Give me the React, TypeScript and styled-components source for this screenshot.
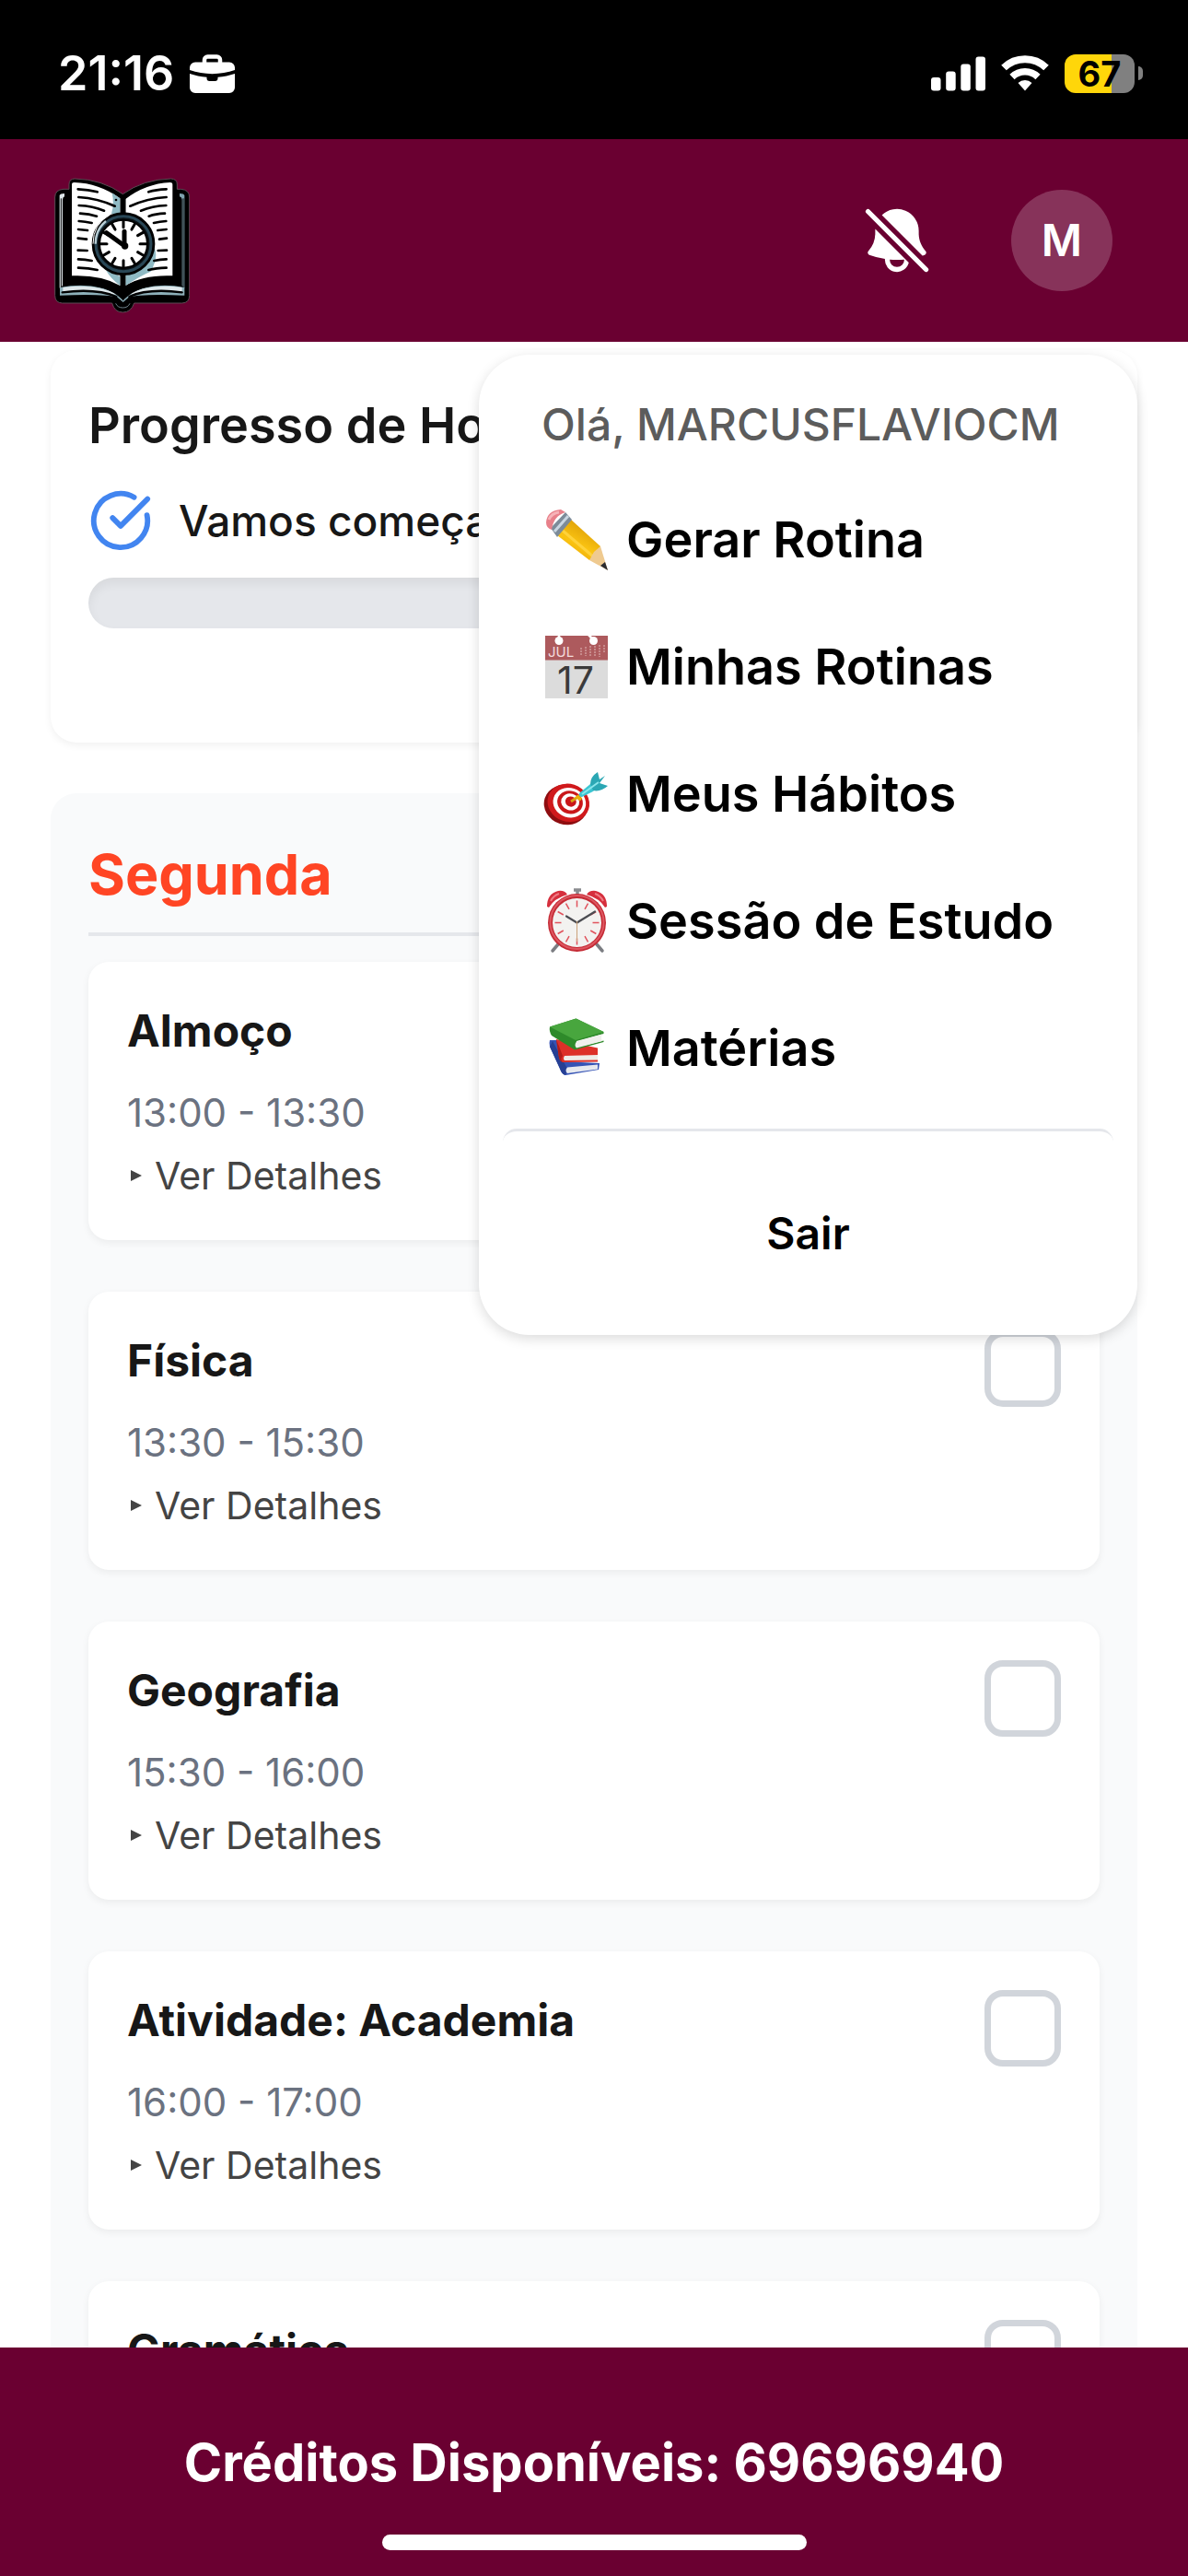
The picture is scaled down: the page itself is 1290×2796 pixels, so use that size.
import React from "react";
import styled, { createGlobalStyle } from "styled-components";
import { CircleCheckBig } from "lucide-react";

const wine = "#6a0031";

const GlobalStyle = createGlobalStyle`
  *, *::before, *::after { box-sizing: border-box; }
  body {
    margin: 0;
    background: #fff;
    color: #171717;
    font-family: Inter, "Liberation Sans", sans-serif;
  }
  h1, h2, h3, p, ul { margin: 0; padding: 0; }
  button { font: inherit; color: inherit; background: none; border: 0; padding: 0; cursor: pointer; }
`;

const Shell = styled.div`
  display: flex;
  flex-direction: column;
  height: 100vh;
`;

/* ---------- status bar ---------- */

const StatusBar = styled.div`
  flex: none;
  display: flex;
  align-items: center;
  justify-content: space-between;
  height: 151px;
  padding: 8px 49px 0 63px;
  background: #000;
  color: #fff;
`;

const StatusGroup = styled.div`
  display: flex;
  align-items: center;
  gap: 17px;
`;

const Clock = styled.span`
  font-size: 52px;
  font-weight: 600;
  line-height: 60px;
`;

const Battery = styled.div`
  display: flex;
  align-items: center;
  gap: 4px;
`;

const BatteryBody = styled.div<{ $level: number }>`
  width: 76px;
  height: 42px;
  border-radius: 12px;
  background: linear-gradient(90deg, #ffd60a ${(p) => p.$level}%, #808080 ${(p) => p.$level}%);
  color: #000;
  font-size: 38px;
  font-weight: 700;
  line-height: 42px;
  text-align: center;
`;

const BatteryTip = styled.div`
  width: 5px;
  height: 15px;
  border-radius: 0 8px 8px 0;
  background: #808080;
`;

/* ---------- header ---------- */

const Header = styled.header`
  position: relative;
  z-index: 2;
  flex: none;
  display: flex;
  align-items: center;
  justify-content: space-between;
  height: 220px;
  padding: 0 82px 0 59px;
  background: ${wine};
`;

const HeaderActions = styled.div`
  display: flex;
  align-items: center;
  gap: 82px;
`;

const IconButton = styled.button`
  display: flex;
  color: #fff;
`;

const Avatar = styled.button`
  width: 110px;
  height: 110px;
  border-radius: 50%;
  background: rgba(255, 255, 255, 0.2);
  color: #fff;
  font-size: 48px;
  font-weight: 600;
  line-height: 110px;
`;

/* ---------- dropdown ---------- */

const Menu = styled.nav`
  position: absolute;
  top: calc(100% + 14px);
  right: 55px;
  width: 715px;
  padding: 28px 26px 54px;
  border-radius: 55px;
  background: #fff;
  color: #000;
  box-shadow: 0 4px 14px rgba(0, 0, 0, 0.14);
`;

const Greeting = styled.p`
  margin-bottom: 8px;
  padding: 0 42px;
  color: #5c5c5c;
  font-size: 48px;
  font-weight: 500;
  line-height: 96px;
  white-space: nowrap;
`;

const MenuList = styled.ul`
  list-style: none;
`;

const MenuLink = styled.a`
  display: flex;
  align-items: center;
  gap: 20px;
  height: 138px;
  padding: 0 42px;
  color: inherit;
  font-size: 54px;
  font-weight: 600;
  line-height: 80px;
  text-decoration: none;
  white-space: nowrap;
`;

const Separator = styled.div`
  height: 30px;
  margin: 18px 0 28px;
  border-top: 3px solid #e5e7eb;
  border-radius: 15px;
`;

const LogoutButton = styled.button`
  display: block;
  width: 100%;
  font-size: 48px;
  font-weight: 600;
  line-height: 112px;
`;

/* ---------- content ---------- */

const Main = styled.main`
  flex: 1;
  min-height: 0;
  display: flex;
  flex-direction: column;
  gap: 55px;
  padding: 9px 55px 55px;
  overflow-y: auto;
  scrollbar-width: none;
`;

const ProgressCard = styled.section`
  flex: none;
  padding: 42px 41px 124px;
  border-radius: 28px;
  background: #fff;
  box-shadow: 0 3px 9px rgba(0, 0, 0, 0.06);
`;

const ProgressTitle = styled.h2`
  font-size: 54px;
  font-weight: 600;
  line-height: 80px;
`;

const ProgressRow = styled.div`
  display: flex;
  align-items: center;
  gap: 28px;
  height: 70px;
  margin: 28px 0 27px;
  font-size: 46px;
  font-weight: 500;
  line-height: 66px;
`;

const Track = styled.div`
  height: 55px;
  border-radius: 28px;
  background: #e5e7eb;
  box-shadow: inset 0 6px 12px rgba(0, 0, 0, 0.06);
`;

const Day = styled.section`
  flex: none;
  padding: 42px 41px;
  border-radius: 28px;
  background: #f9fafb;
`;

const DayTitle = styled.h2`
  margin-bottom: 28px;
  padding-bottom: 17px;
  border-bottom: 4px solid #e5e7eb;
  color: #ff4524;
  font-size: 61px;
  font-weight: 700;
  line-height: 92px;
`;

const TaskList = styled.div`
  display: flex;
  flex-direction: column;
  gap: 56px;
`;

const Task = styled.article`
  display: flex;
  align-items: flex-start;
  justify-content: space-between;
  padding: 42px;
  border-radius: 22px;
  background: #fff;
  box-shadow: 0 3px 9px rgba(0, 0, 0, 0.06);
`;

const TaskTitle = styled.h3`
  margin-bottom: 28px;
  font-size: 48px;
  font-weight: 700;
  line-height: 66px;
`;

const TaskTime = styled.p`
  margin-bottom: 12px;
  color: #6b7280;
  font-size: 42px;
  line-height: 56px;
`;

const Summary = styled.summary`
  display: flex;
  align-items: center;
  gap: 14px;
  padding-left: 4px;
  color: #444;
  font-size: 41px;
  line-height: 56px;
  list-style: none;
  cursor: pointer;

  &::-webkit-details-marker { display: none; }

  &::before {
    content: "";
    border-style: solid;
    border-width: 6px 0 6px 12px;
    border-color: transparent transparent transparent currentColor;
  }
`;

const Checkbox = styled.input`
  appearance: none;
  flex: none;
  width: 83px;
  height: 83px;
  margin: 0;
  border: 7px solid #d1d5db;
  border-radius: 20px;
  background: #fff;
`;

/* ---------- footer ---------- */

const Footer = styled.footer`
  position: relative;
  z-index: 1;
  flex: none;
  display: flex;
  flex-direction: column;
  align-items: center;
  justify-content: space-between;
  height: 248px;
  padding: 85px 0 28px;
  background: ${wine};
  color: #fff;
`;

const Credits = styled.p`
  font-size: 56px;
  font-weight: 700;
  line-height: 80px;
`;

const HomeIndicator = styled.div`
  width: 461px;
  height: 17px;
  border-radius: 9px;
  background: #fff;
`;

/* ---------- drawings ---------- */

const BriefcaseIcon = () => (
  <svg width="49" height="42" viewBox="0 0 49 42" fill="#fff" aria-hidden="true">
    <path d="M16 10V6a3.500 3.500 0 0 1 3.500-3.500h10A3.500 3.500 0 0 1 33 6v4" fill="none" stroke="#fff" strokeWidth="4.500" />
    <path d="M6 8.500h37a6 6 0 0 1 6 6V17C34 22.500 15 22.500 0 17v-2.500a6 6 0 0 1 6-6z" />
    <path d="M0 21c6 2 12 3.200 18.500 3.700V26a3 3 0 0 0 3 3h6a3 3 0 0 0 3-3v-1.300C37 24.200 43 23 49 21v15a6 6 0 0 1-6 6H6a6 6 0 0 1-6-6z" />
  </svg>
);

const SignalIcon = () => (
  <svg width="59" height="38" viewBox="0 0 59 38" fill="#fff" aria-hidden="true">
    <rect x="0" y="23" width="10.500" height="14.500" rx="3" />
    <rect x="16.200" y="16.500" width="10.500" height="21" rx="3" />
    <rect x="32.300" y="8.500" width="10.500" height="29" rx="3" />
    <rect x="48.500" y="0.500" width="10.500" height="37" rx="3" />
  </svg>
);

const WifiIcon = () => (
  <svg width="52" height="39" viewBox="0 0 52 39" fill="none" stroke="#fff" aria-hidden="true">
    <path d="M3 13.500a33 33 0 0 1 46 0" strokeWidth="8" />
    <path d="M12 23.500a20 20 0 0 1 28 0" strokeWidth="7.500" />
    <path d="M18.500 30a11 11 0 0 1 15 0L26 38.500z" fill="#fff" stroke="none" />
  </svg>
);

const BellSlashIcon = () => (
  <svg width="84" height="84" viewBox="0 0 24 24" fill="currentColor" aria-hidden="true">
    <path d="M3.53 2.47a.75.75 0 0 0-1.06 1.06l18 18a.75.75 0 1 0 1.06-1.06l-18-18ZM20.57 16.476c-.223.082-.448.161-.674.238L7.319 4.137A6.75 6.75 0 0 1 18.75 9v.75c0 2.123.8 4.057 2.118 5.52a.75.75 0 0 1-.297 1.206Z" />
    <path
      fillRule="evenodd"
      clipRule="evenodd"
      d="M5.25 9c0-.184.007-.366.022-.546l10.384 10.384a3.751 3.751 0 0 1-7.396-1.119 24.585 24.585 0 0 1-4.831-1.244.75.75 0 0 1-.298-1.205A8.217 8.217 0 0 0 5.25 9.75V9Zm4.502 8.9a2.25 2.25 0 1 0 4.496.002 25.057 25.057 0 0 1-4.496 0Z"
    />
  </svg>
);

const Logo = () => (
  <svg width="147" height="158" viewBox="58 6 441 474" role="img" aria-label="Logo">
    <path
      d="M106 76V60q0-17 18-18 90 2 157 50Q348 44 438 42q20 1 20 18v16h12q28 2 28 26v320q0 24-24 25H318q-10 30-37 30t-35-30H84q-24-1-24-25V102q0-24 28-26z"
      fill="#000"
      stroke="#5d4b55"
      strokeWidth="3"
    />
    <path d="M75 96q2-6 16-6v10q-6 2-6 10v280l-10 8z" fill="#dfe7ea" />
    <path d="M482 96q-2-6-16-6v10q8 2 8 10v280l8 8z" fill="#7fa3ae" />
    <path d="M80 106v290M478 106v290" stroke="#000" strokeWidth="3" />
    <path d="M76 396q120-22 200 30l6 14 6-14q80-52 194-30v26q-140-6-182 6l-18 16-18-16q-44-12-188-6z" fill="#8db0b9" />
    <path d="M86 396q110-14 180 24-90-14-180-12zM474 396q-110-14-180 24 90-14 180-12z" fill="#dfe9ec" />
    <path d="M84 412q110-14 176 14M474 412q-110-14-172 14" stroke="#000" strokeWidth="7" fill="none" strokeLinecap="round" />
    <path d="M92 386q130-14 190 46 60-60 184-46" stroke="#000" strokeWidth="9" fill="none" />
    <path d="M258 448q6 14 23 14t23-14" stroke="#70848c" strokeWidth="3" fill="none" />
    <path d="M115 61q0-7 8-7 80 2 149 52v284q-62-36-157-32z" fill="#fff" />
    <path d="M443 61q0-7-8-7-80 4-145 54v282q58-36 153-32z" fill="#fff" />
    <path d="M246 88l26 18v50h-28q10-30 2-68zM226 340l46 20v30q-30-22-46-50zM290 390v-34q70-10 94-90 14 30-12 78-30 12-82 46z" fill="#8fbac4" />
    <circle cx="259" cy="111" r="4" fill="#000" />
    <path
      d="M135 76q34 1 63 9M137 102q62 4 118 29M138 129q46 2 82 17M142 155q30 1 54 9M138 180q20 1 42 6M136 207l30 3M135 236l28 3M135 275l30 1M136 304q22 1 44 5M136 332q34 1 62 7"
      stroke="#000"
      strokeWidth="8"
      strokeLinecap="round"
      fill="none"
    />
    <path
      d="M423 76q-34 1-58 9M423 102q-62 4-118 29M422 129q-46 2-82 17M418 155q-30 1-52 9M422 180q-20 1-40 6M423 207l-28 3M424 236l-24 3M424 275l-28 1M423 304q-20 1-40 5M423 332q-34 1-58 7"
      stroke="#000"
      strokeWidth="8"
      strokeLinecap="round"
      fill="none"
    />
    <path d="M282 100v60M282 350v72" stroke="#000" strokeWidth="16" />
    <circle cx="283" cy="254" r="98" fill="#0b1216" stroke="#000" strokeWidth="10" />
    <circle cx="283" cy="254" r="90" fill="none" stroke="#294756" strokeWidth="9" />
    <path d="M192 254q0-46 34-74" stroke="#b9ced5" strokeWidth="7" fill="none" />
    <path d="M238 160q-54 30-54 94" stroke="#fff" strokeWidth="3" fill="none" />
    <circle cx="283" cy="254" r="78" fill="#fff" stroke="#000" strokeWidth="6" />
    {Array.from({ length: 12 }, (_, i) => (
      <path key={i} d="M283 180v20" stroke="#000" strokeWidth="9" strokeLinecap="round" transform={`rotate(${i * 30} 283 254)`} />
    ))}
    <path d="M288 262L228 218" stroke="#000" strokeWidth="15" strokeLinecap="round" />
    <path d="M286 260V214" stroke="#000" strokeWidth="15" strokeLinecap="round" />
    <circle cx="288" cy="261" r="11" fill="#000" />
  </svg>
);

const Emoji = ({ children }: { children: React.ReactNode }) => (
  <svg width="72" height="72" viewBox="0 0 72 72" aria-hidden="true">
    {children}
  </svg>
);

const Pencil = () => (
  <Emoji>
    <defs>
      <linearGradient id="pencilBody" x1="0" y1="1" x2="0.6" y2="0">
        <stop offset="0" stopColor="#e29a00" />
        <stop offset="0.5" stopColor="#fbc412" />
        <stop offset="1" stopColor="#d99a05" />
      </linearGradient>
    </defs>
    <path d="M17 31L32 14l32 29-2 9-10 6z" fill="url(#pencilBody)" />
    <path d="M23 26L56 54" stroke="#ffd23a" strokeWidth="3" />
    <path d="M52 58l5-9 7-6 8 26z" fill="#efca90" />
    <path d="M64 64l5-4 3 9z" fill="#2b2b30" />
    <path d="M10 23L26 6l7 8-16 19z" fill="#7c8b99" />
    <path d="M14 27L29 10" stroke="#c9d6e2" strokeWidth="3" />
    <path d="M5 17Q6 4 21 3l5 3Q13 10 11 25q-6-2-6-8z" fill="#e8808a" />
    <path d="M8 14q3-7 11-8" stroke="#f6b3b8" strokeWidth="3" fill="none" />
  </Emoji>
);

const Calendar = () => (
  <Emoji>
    <path fill="#dcdcdc" d="M4 2h68v68H4z" />
    <path fill="#ad5a5d" d="M4 2h68v26.500H4z" />
    <circle cx="19" cy="7.500" r="4.500" fill="#fff" />
    <circle cx="56.500" cy="7.500" r="4.500" fill="#fff" />
    <path d="M19 0v7M51 1l6 6" stroke="#fff" strokeWidth="2.500" />
    <text x="7" y="24.500" fontSize="15" fontWeight="400" fill="#f3dcdc">JUL</text>
    <path d="M43 15v9M48 14v10M53 13v12M58 13v12M63 12v13M68 12v9" stroke="#cf9a9b" strokeWidth="1.500" strokeDasharray="2 1" />
    <text x="37" y="64.500" fontSize="41" fontWeight="400" fill="#3a3a3a" textAnchor="middle">17</text>
  </Emoji>
);

const Target = () => (
  <Emoji>
    <g transform="rotate(18 28 46)">
      <ellipse cx="27" cy="48" rx="24" ry="21.500" fill="#8e0d10" />
      <ellipse cx="29" cy="45" rx="23" ry="20.500" fill="#d0191c" />
      <ellipse cx="30" cy="44.500" rx="18" ry="16" fill="#fff" />
      <ellipse cx="30.500" cy="44" rx="14" ry="12.500" fill="#c9171a" />
      <ellipse cx="30.500" cy="43.500" rx="10" ry="9" fill="#fff" />
      <ellipse cx="31" cy="43" rx="6" ry="5.500" fill="#c9171a" />
    </g>
    <path d="M32 44l9-6" stroke="#d9a514" strokeWidth="3" />
    <path d="M38 38l5 4" stroke="#eab308" strokeWidth="4" />
    <path d="M41 35l12-10 8-3 1 5-6 6-12 6q-4 0-3-4z" fill="#3cc6d2" />
    <path d="M53 25q0-8 8-13l2 8 6-4-6 8 9 3q-8 7-16 5z" fill="#2ba7b4" />
    <path d="M44 36l18-13" stroke="#8be6ec" strokeWidth="2" />
  </Emoji>
);

const AlarmClock = () => (
  <Emoji>
    <path d="M18 61l-6 7M60 61l6 7" stroke="#7b7d82" strokeWidth="3.500" strokeLinecap="round" />
    <path d="M6 20Q6 6 18 3q7-1 10 4Q14 11 8 21zM71 20Q71 6 59 3q-7-1-10 4 14 4 20 14z" fill="#d62f3d" />
    <path d="M10 14q3-6 9-8M67 14q-3-6-9-8" stroke="#ef7a83" strokeWidth="2" fill="none" />
    <path d="M35 2h8M39 2v6" stroke="#8a8c90" strokeWidth="3.500" />
    <circle cx="38.500" cy="37.500" r="31.500" fill="#c42b35" />
    <circle cx="38.500" cy="37" r="29" fill="none" stroke="#de5660" strokeWidth="2" />
    <circle cx="38.500" cy="37.500" r="26.500" fill="#f3f2f0" />
    {Array.from({ length: 12 }, (_, i) => (
      <path key={i} d="M38.500 13.500v7" stroke="#e0525c" strokeWidth="1.500" transform={`rotate(${i * 30} 38.500 37.500)`} />
    ))}
    <path d="M38.500 37.500L27 30.500M38.500 37.500L58 25.500" stroke="#4c4d52" strokeWidth="2.200" strokeLinecap="round" />
    <path d="M38.500 36v22" stroke="#caa27a" strokeWidth="1" />
  </Emoji>
);

const Books = () => (
  <Emoji>
    <path d="M9 27l10 0 4 23 40 2-1 7-36 6q-4-1-6-7L9 34q-1-4 0-7z" fill="#3553b5" />
    <path d="M9 34l11 24q2 6 6 7l2-7L12 28z" fill="#263f94" />
    <path d="M28 56.500l33-3v5l-33 4.500q-3-3 0-6.500z" fill="#e6e9ef" />
    <path d="M16 26l45 9.500 0 15-38 .5q-3-1-4-5z" fill="#dd3028" />
    <path d="M16 26l7 18q-3 4 0 7-3-1-4-5z" fill="#b01d19" />
    <path d="M25 44l36-1v5.500l-36 .5q-2-2 0-5z" fill="#efece7" />
    <path d="M9 12.500L37.500 3.500 67.500 18v2L38 28v7l29.500-7.500v1.500L36 37.500 11 22q-3-5-2-9.500z" fill="#2e8a2a" />
    <path d="M9 12.500L37.500 3.500 67.500 18 37 27z" fill="#48a63e" />
    <path d="M38 28.500l28-8q-2 4 0 7.500L38 35.500q-3-3 0-7z" fill="#f0f0ec" />
  </Emoji>
);

/* ---------- page ---------- */

const menuItems = [
  { label: "Gerar Rotina", icon: <Pencil /> },
  { label: "Minhas Rotinas", icon: <Calendar /> },
  { label: "Meus Hábitos", icon: <Target /> },
  { label: "Sessão de Estudo", icon: <AlarmClock /> },
  { label: "Matérias", icon: <Books /> },
];

const tasks = [
  { title: "Almoço", time: "13:00 - 13:30" },
  { title: "Física", time: "13:30 - 15:30" },
  { title: "Geografia", time: "15:30 - 16:00" },
  { title: "Atividade: Academia", time: "16:00 - 17:00" },
  { title: "Gramática", time: "17:00 - 18:00" },
];

export default function App() {
  return (
    <Shell>
      <GlobalStyle />
      <StatusBar>
        <StatusGroup>
          <Clock>21:16</Clock>
          <BriefcaseIcon />
        </StatusGroup>
        <StatusGroup>
          <SignalIcon />
          <WifiIcon />
          <Battery>
            <BatteryBody $level={67}>67</BatteryBody>
            <BatteryTip />
          </Battery>
        </StatusGroup>
      </StatusBar>

      <Header>
        <Logo />
        <HeaderActions>
          <IconButton aria-label="Notificações desativadas">
            <BellSlashIcon />
          </IconButton>
          <Avatar aria-expanded="true">M</Avatar>
        </HeaderActions>
        <Menu>
          <Greeting>Olá, MARCUSFLAVIOCM</Greeting>
          <MenuList>
            {menuItems.map((item) => (
              <li key={item.label}>
                <MenuLink href="#">
                  {item.icon}
                  {item.label}
                </MenuLink>
              </li>
            ))}
          </MenuList>
          <Separator />
          <LogoutButton>Sair</LogoutButton>
        </Menu>
      </Header>

      <Main>
        <ProgressCard>
          <ProgressTitle>Progresso de Hoje</ProgressTitle>
          <ProgressRow>
            <CircleCheckBig size={70} color="#4285f0" strokeWidth={2} />
            Vamos começar!
          </ProgressRow>
          <Track role="progressbar" aria-valuenow={0} aria-label="Progresso de Hoje" />
        </ProgressCard>

        <Day>
          <DayTitle>Segunda</DayTitle>
          <TaskList>
            {tasks.map((task) => (
              <Task key={task.title}>
                <div>
                  <TaskTitle>{task.title}</TaskTitle>
                  <TaskTime>{task.time}</TaskTime>
                  <details>
                    <Summary>Ver Detalhes</Summary>
                  </details>
                </div>
                <Checkbox type="checkbox" aria-label={task.title} />
              </Task>
            ))}
          </TaskList>
        </Day>
      </Main>

      <Footer>
        <Credits>Créditos Disponíveis: 69696940</Credits>
        <HomeIndicator />
      </Footer>
    </Shell>
  );
}
